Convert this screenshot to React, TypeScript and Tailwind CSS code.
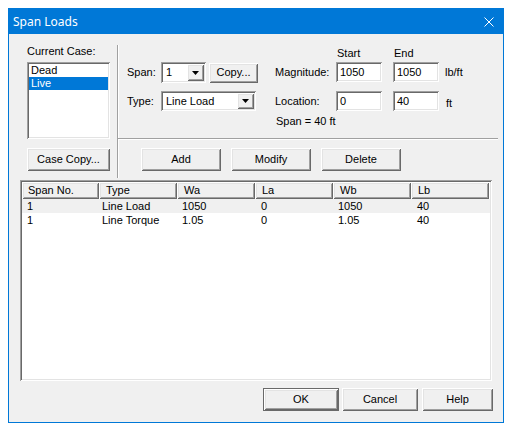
import * as React from 'react';

const sunken =
  'shadow-[inset_1px_1px_0_#a0a0a0,inset_-1px_-1px_0_#ffffff,inset_2px_2px_0_#696969,inset_-2px_-2px_0_#e3e3e3]';
const raised =
  'shadow-[inset_1px_1px_0_#ffffff,inset_-1px_-1px_0_#696969,inset_2px_2px_0_#e3e3e3,inset_-2px_-2px_0_#a0a0a0]';

function Button({
  label,
  className = '',
  isDefault = false,
}: {
  label: string;
  className?: string;
  isDefault?: boolean;
}) {
  return (
    <div
      className={`flex bg-[#f0f0f0] ${isDefault ? 'border border-[#696969]' : ''} ${className}`}
    >
      <div className={`flex h-full w-full items-center justify-center ${raised}`}>
        {label}
      </div>
    </div>
  );
}

function Arrow() {
  return (
    <svg width="7" height="4" viewBox="0 0 7 4">
      <polygon points="0,0 7,0 3.5,4" fill="#000" />
    </svg>
  );
}

function Combo({ value, className = '' }: { value: string; className?: string }) {
  return (
    <div className={`flex bg-white p-[2px] ${sunken} ${className}`}>
      <div className="flex flex-1 items-center pl-[3px]">{value}</div>
      <div className={`flex w-[17px] items-center justify-center bg-[#f0f0f0] ${raised}`}>
        <Arrow />
      </div>
    </div>
  );
}

function TextBox({ value }: { value: string }) {
  return (
    <div className={`flex h-[20px] w-[46px] items-center bg-white pl-[4px] ${sunken}`}>
      {value}
    </div>
  );
}

const columns = [
  { title: 'Span No.', width: 'w-[77px]', pad: 'pl-[6px]', rowPad: 'pl-[5px]' },
  { title: 'Type', width: 'w-[78px]', pad: 'pl-[7px]', rowPad: 'pl-[3px]' },
  { title: 'Wa', width: 'w-[78px]', pad: 'pl-[7px]', rowPad: 'pl-[5px]' },
  { title: 'La', width: 'w-[78px]', pad: 'pl-[7px]', rowPad: 'pl-[6px]' },
  { title: 'Wb', width: 'w-[78px]', pad: 'pl-[7px]', rowPad: 'pl-[5px]' },
  { title: 'Lb', width: 'w-[78px]', pad: 'pl-[7px]', rowPad: 'pl-[6px]' },
];

const rows = [
  ['1', 'Line Load', '1050', '0', '1050', '40'],
  ['1', 'Line Torque', '1.05', '0', '1.05', '40'],
];

export default function App() {
  return (
    <div className="min-h-screen bg-white p-[8px] font-['Liberation_Sans',Arial,sans-serif] text-[11px] leading-[13px] text-black">
      <div className="flex h-[415px] w-[496px] flex-col border border-[#0078d7] bg-[#f0f0f0]">
        {/* Title bar */}
        <div className="flex h-[25px] items-center justify-between bg-[#0078d7] pl-[4px] pr-[9px] text-white">
          <span className="font-['Noto_Sans',sans-serif] text-[12px] leading-[16px]">Span Loads</span>
          <svg width="10" height="10" viewBox="0 0 10 10">
            <path d="M0.5 0.5 L9.5 9.5 M9.5 0.5 L0.5 9.5" stroke="#fff" strokeWidth="1" />
          </svg>
        </div>

        {/* Top section */}
        <div className="flex h-[146px]">
          <div className="flex w-[108px] flex-col pl-[18px] pt-[11px]">
            <div className="h-[13px]">Current Case:</div>
            <div className={`mt-[4px] h-[77px] w-[83px] bg-white p-[2px] ${sunken}`}>
              <div className="h-[13px] pl-[2px]">Dead</div>
              <div className="h-[13px] bg-[#0078d7] pl-[2px] text-white">Live</div>
            </div>
            <Button label="Case Copy..." className="mt-[9px] h-[23px] w-[83px]" />
          </div>

          <div className="mt-[11px] h-[133px] w-[2px] border-l border-r border-l-[#a0a0a0] border-r-white" />

          <div className="flex flex-1 flex-col">
            <div className="flex h-[104px]">
              <div className="flex w-[139px] flex-col pl-[8px] pt-[28px]">
                <div className="flex h-[21px] items-center">
                  <span className="w-[34px]">Span:</span>
                  <Combo value="1" className="h-[21px] w-[45px]" />
                  <Button label="Copy..." className="ml-[3px] h-[20px] w-[49px]" />
                </div>
                <div className="mt-[8px] flex h-[20px] items-center">
                  <span className="w-[34px]">Type:</span>
                  <Combo value="Line Load" className="h-[20px] w-[95px]" />
                </div>
              </div>

              <div className="ml-[17px] flex flex-col pt-[13px]">
                <div className="flex h-[13px]">
                  <span className="w-[61px]" />
                  <span className="w-[57px] pl-[1px]">Start</span>
                  <span className="pl-[1px]">End</span>
                </div>
                <div className="mt-[2px] flex h-[20px] items-center">
                  <span className="w-[61px]">Magnitude:</span>
                  <TextBox value="1050" />
                  <div className="ml-[11px]">
                    <TextBox value="1050" />
                  </div>
                  <span className="ml-[6px]">lb/ft</span>
                </div>
                <div className="mt-[9px] flex h-[20px] items-center">
                  <span className="w-[61px]">Location:</span>
                  <TextBox value="0" />
                  <div className="ml-[11px]">
                    <TextBox value="40" />
                  </div>
                  <span className="ml-[7px] mt-[5px]">ft</span>
                </div>
                <div className="mt-[4px] pl-[1px]">Span = 40 ft</div>
              </div>
            </div>

            <div className="-ml-[1px] h-[2px] w-[380px] border-t border-b border-t-[#a0a0a0] border-b-white" />

            <div className="mt-[8px] flex gap-[10px] pl-[22px]">
              <Button label="Add" className="h-[23px] w-[80px]" />
              <Button label="Modify" className="h-[23px] w-[80px]" />
              <Button label="Delete" className="h-[23px] w-[80px]" />
            </div>
          </div>
        </div>

        {/* List view */}
        <div className={`ml-[11px] h-[201px] w-[472px] bg-white p-[2px] ${sunken}`}>
          <div className="flex h-[17px]">
            {columns.map((c) => (
              <div
                key={c.title}
                className={`flex items-center bg-[#f0f0f0] ${c.width} ${c.pad} ${raised}`}
              >
                {c.title}
              </div>
            ))}
          </div>
          {rows.map((r, i) => (
            <div key={i} className={`flex h-[14px] items-center ${i === 0 ? 'bg-[#f0f0f0]' : ''}`}>
              {r.map((cell, j) => (
                <div key={j} className={`${columns[j].width} ${columns[j].rowPad}`}>
                  {cell}
                </div>
              ))}
            </div>
          ))}
        </div>

        {/* Dialog buttons */}
        <div className="mt-[7px] flex pl-[254px]">
          <Button label="OK" isDefault className="h-[23px] w-[76px]" />
          <Button label="Cancel" className="ml-[3px] h-[23px] w-[76px]" />
          <Button label="Help" className="ml-[4px] h-[23px] w-[71px]" />
        </div>
      </div>
    </div>
  );
}
